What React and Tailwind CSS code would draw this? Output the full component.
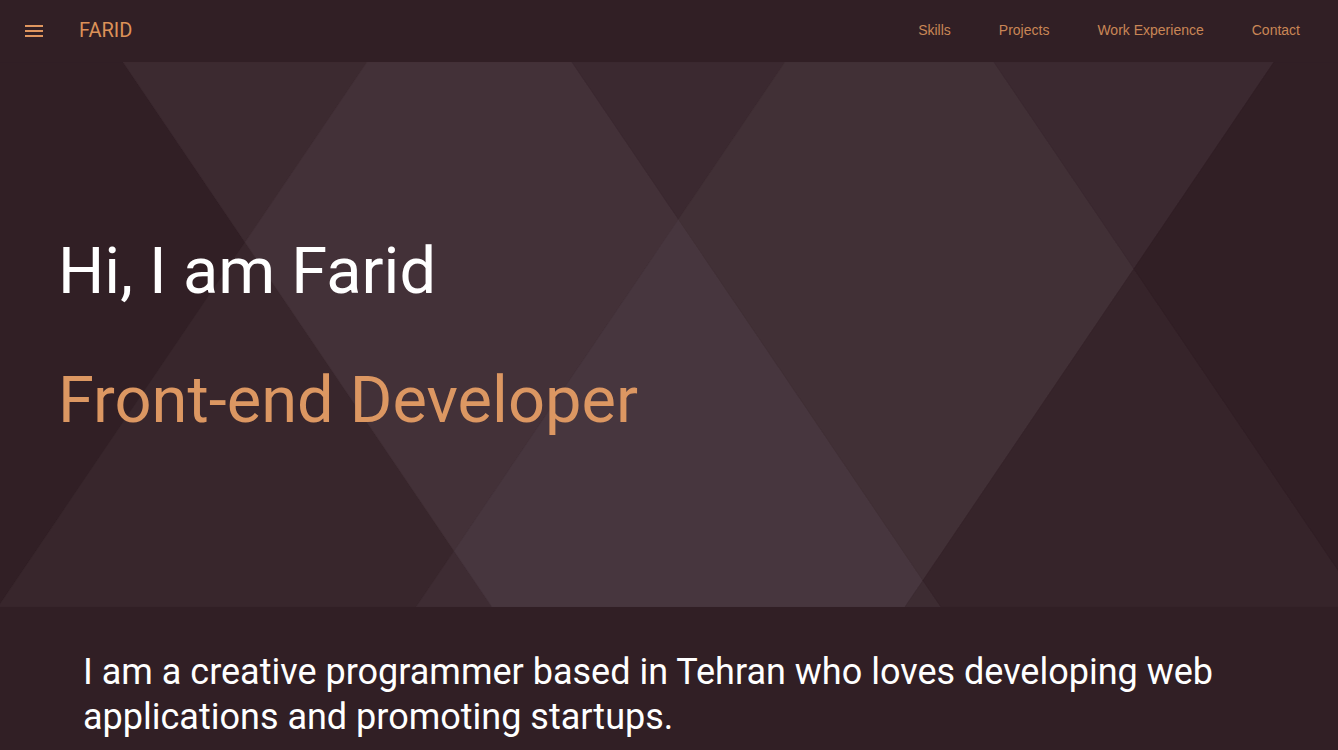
import React from "react";

const W = 1338;
const H = 545;
const LX = [
  [123, 492],
  [572, 941],
  [994, 1363],
];
const RX = [
  [367, -2],
  [785, 416],
  [1274, 905],
];

const COLORS = {
  "0,0": "#311f25",
  "1,0": "#3c2a30",
  "1,1": "#433138",
  "2,1": "#3b2930",
  "2,2": "#413036",
  "3,2": "#3b2930",
  "3,3": "#311f25",
  "0,1": "#38262c",
  "0,2": "#3e2c33",
  "1,2": "#47363e",
  "1,3": "#3d2c32",
  "2,3": "#36242a",
};

function band(xs, i) {
  const l = i === 0 ? [-3000, -3000] : xs[i - 1];
  const r = i === 3 ? [5000, 5000] : xs[i];
  return [
    [l[0], 0],
    [r[0], 0],
    [r[1], H],
    [l[1], H],
  ];
}

function clip(subject, clipPoly) {
  let out = subject;
  for (let i = 0; i < clipPoly.length; i++) {
    const A = clipPoly[i];
    const B = clipPoly[(i + 1) % clipPoly.length];
    const inside = (P) =>
      (B[0] - A[0]) * (P[1] - A[1]) - (B[1] - A[1]) * (P[0] - A[0]) >= 0;
    const inter = (P, Q) => {
      const x1 = P[0], y1 = P[1], x2 = Q[0], y2 = Q[1];
      const x3 = A[0], y3 = A[1], x4 = B[0], y4 = B[1];
      const den = (x1 - x2) * (y3 - y4) - (y1 - y2) * (x3 - x4);
      const t = ((x1 - x3) * (y3 - y4) - (y1 - y3) * (x3 - x4)) / den;
      return [x1 + t * (x2 - x1), y1 + t * (y2 - y1)];
    };
    const input = out;
    out = [];
    if (!input.length) break;
    for (let j = 0; j < input.length; j++) {
      const P = input[j];
      const Q = input[(j + 1) % input.length];
      const pin = inside(P);
      const qin = inside(Q);
      if (pin) {
        out.push(P);
        if (!qin) out.push(inter(P, Q));
      } else if (qin) {
        out.push(inter(P, Q));
      }
    }
  }
  return out;
}

function HeroBackground() {
  const cells = [];
  for (let a = 0; a < 4; a++) {
    for (let b = 0; b < 4; b++) {
      const poly = clip(band(LX, a), band(RX, b));
      if (poly.length < 3) continue;
      const color = COLORS[`${a},${b}`] || "#311f25";
      cells.push(
        <polygon
          key={`${a}-${b}`}
          points={poly.map((p) => `${p[0]},${p[1]}`).join(" ")}
          fill={color}
          stroke={color}
          strokeWidth="0.6"
        />
      );
    }
  }
  return (
    <svg
      className="absolute inset-0 h-full w-full"
      viewBox={`0 0 ${W} ${H}`}
      preserveAspectRatio="none"
    >
      <rect x="0" y="0" width={W} height={H} fill="#311f25" />
      {cells}
    </svg>
  );
}

function MenuIcon() {
  return (
    <svg width="18" height="12" viewBox="0 0 18 12" className="block">
      <rect x="0" y="0" width="18" height="2" fill="#e0965f" />
      <rect x="0" y="5" width="18" height="2" fill="#e0965f" />
      <rect x="0" y="10" width="18" height="2" fill="#e0965f" />
    </svg>
  );
}

export default function App() {
  return (
    <div className="min-h-screen w-full bg-[#311f25] font-['Roboto',sans-serif]">
      <header className="flex h-[62px] items-center justify-between bg-[#311f25] pb-[2px] pl-[25px] pr-[14px]">
        <div className="flex items-center">
          <div className="pt-[2px]">
            <MenuIcon />
          </div>
          <span className="ml-[36px] text-[20px] leading-none text-[#dc9158]">
            FARID
          </span>
        </div>
        <nav className="flex items-center font-['Liberation_Sans',Arial,sans-serif] text-[14px] text-[#c98656]">
          <a className="px-6">Skills</a>
          <a className="px-6">Projects</a>
          <a className="px-6">Work Experience</a>
          <a className="px-6">Contact</a>
        </nav>
      </header>

      <section className="relative h-[545px] overflow-hidden">
        <HeroBackground />
        <div className="relative flex h-full flex-col justify-center gap-[64px] pl-[58px] pt-[2px]">
          <h1 className="text-[65px] leading-none font-normal text-white">
            Hi, I am Farid
          </h1>
          <h2 className="text-[65px] leading-none font-normal text-[#dc9762]">
            Front-end Developer
          </h2>
        </div>
      </section>

      <section className="bg-[#311f25] px-[83px] pt-[43px] pb-10">
        <p className="max-w-[1160px] text-[36px] leading-[45px] text-white">
          I am a creative programmer based in Tehran who loves developing web
          applications and promoting startups.
        </p>
      </section>
    </div>
  );
}
